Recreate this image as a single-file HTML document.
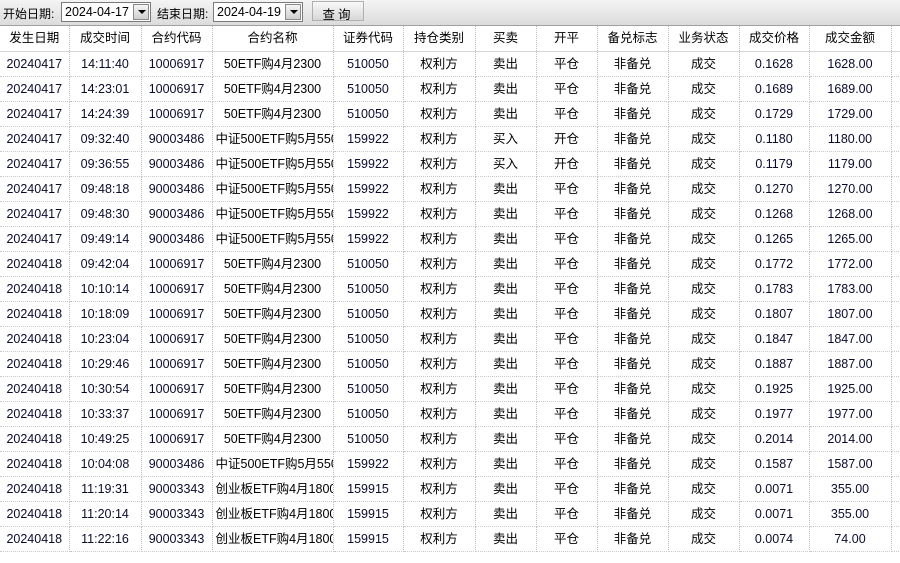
<!DOCTYPE html>
<html><head><meta charset="utf-8"><style>
*{margin:0;padding:0;box-sizing:border-box}
body{width:900px;height:563px;background:#fff;font-family:"Liberation Sans","Noto Sans CJK SC",sans-serif;font-size:12px;color:#000;position:relative;overflow:hidden}
.bar{position:absolute;left:0;top:0;width:900px;height:26px;background:linear-gradient(#f4f4f4,#dcdcdc);border-bottom:1px solid #a0a0a0}
.lbl{position:absolute;top:5px;font-size:12px}
.sel{position:absolute;top:2px;height:20px;border:1px solid #7a7a7a;background:#fff;font-size:12.5px;padding:2px 0 0 3px}
.sel .ar{position:absolute;right:1px;top:1px;width:16px;height:16px;background:linear-gradient(#f4f4f4,#cfcfcf);border:1px solid #8a8a8a}
.sel .ar:after{content:"";position:absolute;left:4px;top:5px;border-left:4px solid transparent;border-right:4px solid transparent;border-top:4px solid #000}
.btn{position:absolute;left:312px;top:1px;width:52px;height:20px;border:1px solid #b0b0b0;background:linear-gradient(#f8f8f8,#d8d8d8);text-align:center;font-size:12.5px;padding-top:2px;letter-spacing:3px}
table{position:absolute;left:0;top:26px;width:900px;border-collapse:collapse;table-layout:fixed}
td,th{height:25px;line-height:24px;border-right:1px dotted #c0c0c0;border-bottom:1px dotted #c8c8c8;text-align:center;font-weight:normal;white-space:nowrap;overflow:hidden;padding:0;font-size:12.5px;vertical-align:middle}
th{background:#fff;border-bottom:1px solid #d8d8d8}
td.n{color:#0a0a30}
td div{width:120px;height:24px;overflow:hidden;white-space:nowrap;font-size:12.5px}
</style></head><body>
<div class="bar"></div>
<div class="lbl" style="left:3px">开始日期:</div>
<div class="sel" style="left:61px;width:90px">2024-04-17<span class="ar"></span></div>
<div class="lbl" style="left:157px">结束日期:</div>
<div class="sel" style="left:213px;width:90px">2024-04-19<span class="ar"></span></div>
<div class="btn">查询</div>
<table>
<colgroup><col style="width:69px"><col style="width:72px"><col style="width:71px"><col style="width:121px"><col style="width:70px"><col style="width:72px"><col style="width:61px"><col style="width:61px"><col style="width:71px"><col style="width:71px"><col style="width:70px"><col style="width:82px"><col style="width:9px"></colgroup>
<tr><th>发生日期</th><th>成交时间</th><th>合约代码</th><th>合约名称</th><th>证券代码</th><th>持仓类别</th><th>买卖</th><th>开平</th><th>备兑标志</th><th>业务状态</th><th>成交价格</th><th>成交金额</th><th></th></tr>
<tbody id="b">
<tr><td class="n">20240417</td><td class="n">14:11:40</td><td class="n">10006917</td><td><div>50ETF购4月2300</div></td><td class="n">510050</td><td>权利方</td><td>卖出</td><td>平仓</td><td>非备兑</td><td>成交</td><td class="n">0.1628</td><td class="n">1628.00</td><td></td></tr>
<tr><td class="n">20240417</td><td class="n">14:23:01</td><td class="n">10006917</td><td><div>50ETF购4月2300</div></td><td class="n">510050</td><td>权利方</td><td>卖出</td><td>平仓</td><td>非备兑</td><td>成交</td><td class="n">0.1689</td><td class="n">1689.00</td><td></td></tr>
<tr><td class="n">20240417</td><td class="n">14:24:39</td><td class="n">10006917</td><td><div>50ETF购4月2300</div></td><td class="n">510050</td><td>权利方</td><td>卖出</td><td>平仓</td><td>非备兑</td><td>成交</td><td class="n">0.1729</td><td class="n">1729.00</td><td></td></tr>
<tr><td class="n">20240417</td><td class="n">09:32:40</td><td class="n">90003486</td><td><div style="text-align:left;padding-left:3px">中证500ETF购5月5500</div></td><td class="n">159922</td><td>权利方</td><td>买入</td><td>开仓</td><td>非备兑</td><td>成交</td><td class="n">0.1180</td><td class="n">1180.00</td><td></td></tr>
<tr><td class="n">20240417</td><td class="n">09:36:55</td><td class="n">90003486</td><td><div style="text-align:left;padding-left:3px">中证500ETF购5月5500</div></td><td class="n">159922</td><td>权利方</td><td>买入</td><td>开仓</td><td>非备兑</td><td>成交</td><td class="n">0.1179</td><td class="n">1179.00</td><td></td></tr>
<tr><td class="n">20240417</td><td class="n">09:48:18</td><td class="n">90003486</td><td><div style="text-align:left;padding-left:3px">中证500ETF购5月5500</div></td><td class="n">159922</td><td>权利方</td><td>卖出</td><td>平仓</td><td>非备兑</td><td>成交</td><td class="n">0.1270</td><td class="n">1270.00</td><td></td></tr>
<tr><td class="n">20240417</td><td class="n">09:48:30</td><td class="n">90003486</td><td><div style="text-align:left;padding-left:3px">中证500ETF购5月5500</div></td><td class="n">159922</td><td>权利方</td><td>卖出</td><td>平仓</td><td>非备兑</td><td>成交</td><td class="n">0.1268</td><td class="n">1268.00</td><td></td></tr>
<tr><td class="n">20240417</td><td class="n">09:49:14</td><td class="n">90003486</td><td><div style="text-align:left;padding-left:3px">中证500ETF购5月5500</div></td><td class="n">159922</td><td>权利方</td><td>卖出</td><td>平仓</td><td>非备兑</td><td>成交</td><td class="n">0.1265</td><td class="n">1265.00</td><td></td></tr>
<tr><td class="n">20240418</td><td class="n">09:42:04</td><td class="n">10006917</td><td><div>50ETF购4月2300</div></td><td class="n">510050</td><td>权利方</td><td>卖出</td><td>平仓</td><td>非备兑</td><td>成交</td><td class="n">0.1772</td><td class="n">1772.00</td><td></td></tr>
<tr><td class="n">20240418</td><td class="n">10:10:14</td><td class="n">10006917</td><td><div>50ETF购4月2300</div></td><td class="n">510050</td><td>权利方</td><td>卖出</td><td>平仓</td><td>非备兑</td><td>成交</td><td class="n">0.1783</td><td class="n">1783.00</td><td></td></tr>
<tr><td class="n">20240418</td><td class="n">10:18:09</td><td class="n">10006917</td><td><div>50ETF购4月2300</div></td><td class="n">510050</td><td>权利方</td><td>卖出</td><td>平仓</td><td>非备兑</td><td>成交</td><td class="n">0.1807</td><td class="n">1807.00</td><td></td></tr>
<tr><td class="n">20240418</td><td class="n">10:23:04</td><td class="n">10006917</td><td><div>50ETF购4月2300</div></td><td class="n">510050</td><td>权利方</td><td>卖出</td><td>平仓</td><td>非备兑</td><td>成交</td><td class="n">0.1847</td><td class="n">1847.00</td><td></td></tr>
<tr><td class="n">20240418</td><td class="n">10:29:46</td><td class="n">10006917</td><td><div>50ETF购4月2300</div></td><td class="n">510050</td><td>权利方</td><td>卖出</td><td>平仓</td><td>非备兑</td><td>成交</td><td class="n">0.1887</td><td class="n">1887.00</td><td></td></tr>
<tr><td class="n">20240418</td><td class="n">10:30:54</td><td class="n">10006917</td><td><div>50ETF购4月2300</div></td><td class="n">510050</td><td>权利方</td><td>卖出</td><td>平仓</td><td>非备兑</td><td>成交</td><td class="n">0.1925</td><td class="n">1925.00</td><td></td></tr>
<tr><td class="n">20240418</td><td class="n">10:33:37</td><td class="n">10006917</td><td><div>50ETF购4月2300</div></td><td class="n">510050</td><td>权利方</td><td>卖出</td><td>平仓</td><td>非备兑</td><td>成交</td><td class="n">0.1977</td><td class="n">1977.00</td><td></td></tr>
<tr><td class="n">20240418</td><td class="n">10:49:25</td><td class="n">10006917</td><td><div>50ETF购4月2300</div></td><td class="n">510050</td><td>权利方</td><td>卖出</td><td>平仓</td><td>非备兑</td><td>成交</td><td class="n">0.2014</td><td class="n">2014.00</td><td></td></tr>
<tr><td class="n">20240418</td><td class="n">10:04:08</td><td class="n">90003486</td><td><div style="text-align:left;padding-left:3px">中证500ETF购5月5500</div></td><td class="n">159922</td><td>权利方</td><td>卖出</td><td>平仓</td><td>非备兑</td><td>成交</td><td class="n">0.1587</td><td class="n">1587.00</td><td></td></tr>
<tr><td class="n">20240418</td><td class="n">11:19:31</td><td class="n">90003343</td><td><div style="text-align:left;padding-left:3px">创业板ETF购4月1800</div></td><td class="n">159915</td><td>权利方</td><td>卖出</td><td>平仓</td><td>非备兑</td><td>成交</td><td class="n">0.0071</td><td class="n">355.00</td><td></td></tr>
<tr><td class="n">20240418</td><td class="n">11:20:14</td><td class="n">90003343</td><td><div style="text-align:left;padding-left:3px">创业板ETF购4月1800</div></td><td class="n">159915</td><td>权利方</td><td>卖出</td><td>平仓</td><td>非备兑</td><td>成交</td><td class="n">0.0071</td><td class="n">355.00</td><td></td></tr>
<tr><td class="n">20240418</td><td class="n">11:22:16</td><td class="n">90003343</td><td><div style="text-align:left;padding-left:3px">创业板ETF购4月1800</div></td><td class="n">159915</td><td>权利方</td><td>卖出</td><td>平仓</td><td>非备兑</td><td>成交</td><td class="n">0.0074</td><td class="n">74.00</td><td></td></tr>
</tbody></table>
</body></html>
